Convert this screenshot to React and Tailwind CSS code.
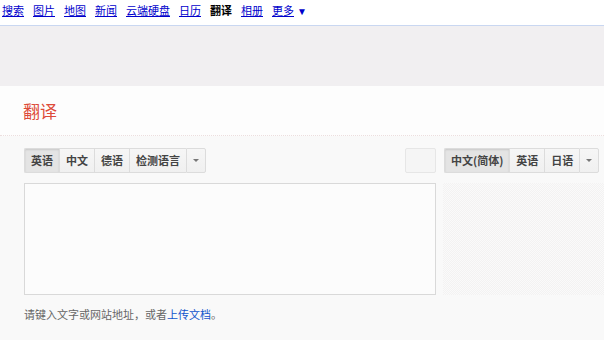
const navItems = ["搜索", "图片", "地图", "新闻", "云端硬盘", "日历", "翻译", "相册"];

function Arrow() {
  return (
    <span className="inline-block w-0 h-0 border-l-[3px] border-r-[3px] border-t-[3px] border-l-transparent border-r-transparent border-t-[#777]" />
  );
}

function LangButton({ label, selected, first }) {
  return (
    <div
      className={
        "shrink-0 whitespace-nowrap h-[25px] flex items-center justify-center px-[6px] text-[11px] font-bold text-[#444] border-y border-l border-[#dcdcdc] " +
        (first ? "rounded-l-[2px] " : "") +
        (selected
          ? "bg-[#e4e4e4] border-[#cfcfcf] shadow-[inset_0_1px_2px_rgba(0,0,0,0.12)] text-[#333]"
          : "bg-gradient-to-b from-[#f6f6f6] to-[#f0f0f0]")
      }
    >
      {label}
    </div>
  );
}

function DropButton() {
  return (
    <div className="shrink-0 h-[25px] w-[20px] flex items-center justify-center border border-[#dcdcdc] rounded-r-[2px] bg-gradient-to-b from-[#f6f6f6] to-[#f0f0f0]">
      <Arrow />
    </div>
  );
}

export default function App() {
  return (
    <div className="w-[604px] h-[340px] overflow-hidden bg-[#f9f9f9] font-['Liberation_Sans','Noto_Sans_CJK_SC',sans-serif]">
      <div className="h-[25px] bg-white flex items-start pt-[4px] pl-[2px] gap-[9px] text-[11px] leading-[14px]">
        {navItems.map((item) =>
          item === "翻译" ? (
            <span key={item} className="font-bold text-black">
              {item}
            </span>
          ) : (
            <a key={item} href="#" className="text-[#00c] underline">
              {item}
            </a>
          )
        )}
        <a href="#" className="text-[#00c]">
          <span className="underline">更多</span>
          <span className="ml-[3px] text-[10px]">▼</span>
        </a>
      </div>
      <div className="h-[1px] bg-[#c9d7f1]" />
      <div className="h-[60px] bg-[#f1eff1]" />
      <div className="h-[50px] bg-[#fdfdfd] border-b border-dotted border-[#ecdede] flex items-center pl-[23px]">
        <h1 className="text-[17px] text-[#dd4b39] font-normal font-['Noto_Sans_CJK_SC',sans-serif]">翻译</h1>
      </div>
      <div className="flex gap-[7px] pl-[24px] pt-[12px] font-['Noto_Sans_CJK_SC',sans-serif]">
        <div className="w-[412px] shrink-0 flex flex-col">
          <div className="flex items-center">
            <div className="flex">
              <LangButton label="英语" selected first />
              <LangButton label="中文" />
              <LangButton label="德语" />
              <LangButton label="检测语言" />
              <DropButton />
            </div>
            <div className="flex-1" />
            <div className="h-[25px] w-[31px] border border-[#e6e6e6] rounded-[2px] bg-[#f5f5f5]" />
          </div>
          <div className="mt-[10px] h-[112px] border border-[#d9d9d9] bg-[#fcfcfc]" />
          <p className="mt-[11px] text-[11px] text-[#666]">
            请键入文字或网站地址，或者<a href="#" className="text-[#15c]">上传文档</a>。
          </p>
        </div>
        <div className="flex-1 min-w-0 flex flex-col">
          <div className="flex pl-[1px]">
            <LangButton label="中文(简体)" selected first />
            <LangButton label="英语" />
            <LangButton label="日语" />
            <DropButton />
          </div>
          <div className="mt-[10px] h-[112px] bg-[conic-gradient(#f3f2f2_25%,#fafafa_0_50%,#f3f2f2_0_75%,#fafafa_0)] bg-[length:2px_2px]" />
        </div>
      </div>
    </div>
  );
}
